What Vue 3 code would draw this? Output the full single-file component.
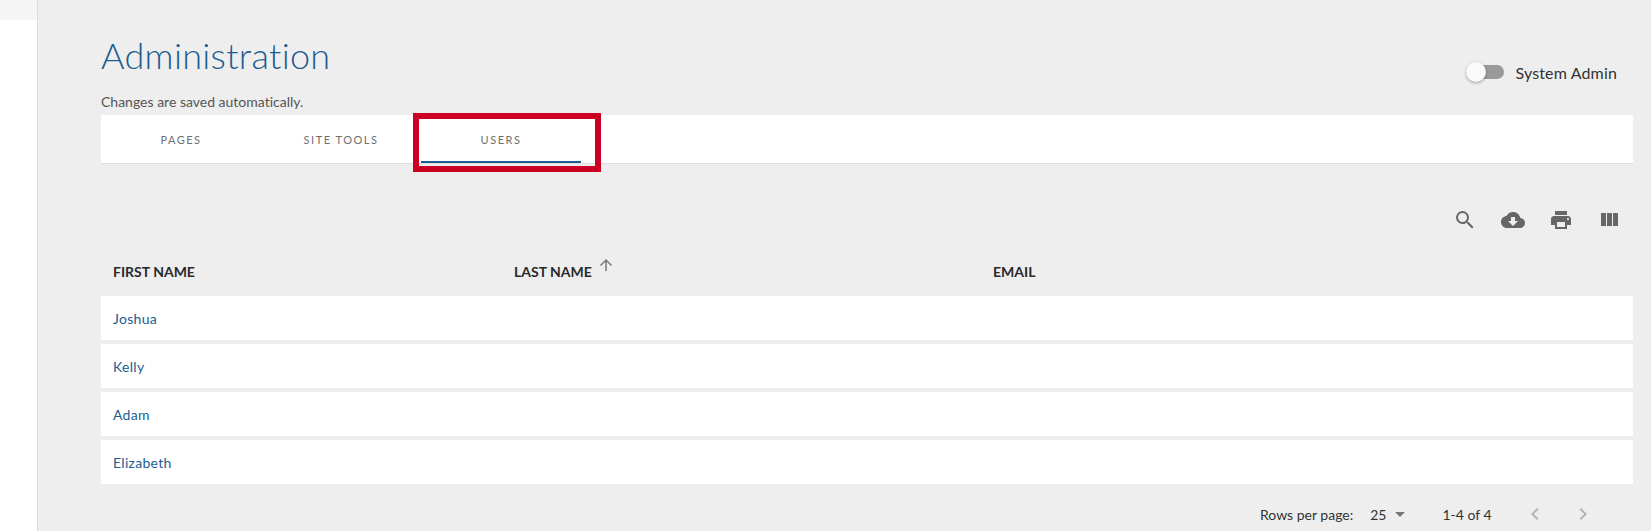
<script setup>
const tabs = [
  { label: 'PAGES', active: false },
  { label: 'SITE TOOLS', active: false },
  { label: 'USERS', active: true }
]
const users = ['Joshua', 'Kelly', 'Adam', 'Elizabeth']
const tools = [
  { name: 'search', d: 'M15.5 14h-.79l-.28-.27A6.471 6.471 0 0 0 16 9.5 6.5 6.5 0 1 0 9.5 16c1.61 0 3.09-.59 4.23-1.57l.27.28v.79l5 4.99L20.49 19l-4.99-5zm-6 0C7.01 14 5 11.99 5 9.5S7.01 5 9.5 5 14 7.01 14 9.5 11.99 14 9.5 14z' },
  { name: 'download', d: 'M19.35 10.04C18.67 6.59 15.64 4 12 4 9.11 4 6.6 5.64 5.35 8.04 2.34 8.36 0 10.91 0 14c0 3.31 2.69 6 6 6h13c2.76 0 5-2.24 5-5 0-2.64-2.05-4.78-4.65-4.96zM17 13l-5 5-5-5h3V9h4v4h3z' },
  { name: 'print', d: 'M19 8H5c-1.66 0-3 1.34-3 3v6h4v4h12v-4h4v-6c0-1.66-1.34-3-3-3zm-3 11H8v-5h8v5zm3-7c-.55 0-1-.45-1-1s.45-1 1-1 1 .45 1 1-.45 1-1 1zm-1-9H6v4h12V3z' },
  { name: 'columns', d: 'M10 18h5V5h-5v13zm-6 0h5V5H4v13zM16 5v13h5V5h-5z' }
]
</script>

<template>
  <div class="page">
    <aside class="sidebar"><div class="sidebar-top"></div></aside>
    <main class="main">
      <header class="head">
        <div>
          <h1 class="title">Administration</h1>
          <p class="note">Changes are saved automatically.</p>
        </div>
        <label class="switch">
          <span class="track"><span class="thumb"></span></span>
          <span class="switch-label">System Admin</span>
        </label>
      </header>

      <nav class="tabs">
        <div v-for="t in tabs" :key="t.label" class="tab" :class="{ active: t.active }">
          {{ t.label }}
          <span v-if="t.active" class="highlight"></span>
        </div>
      </nav>

      <div class="tools">
        <svg v-for="t in tools" :key="t.name" class="tool" viewBox="0 0 24 24"><path :d="t.d" /></svg>
      </div>

      <div class="row header-row">
        <div class="cell">FIRST NAME</div>
        <div class="cell">
          LAST NAME
          <svg class="sort" viewBox="0 0 24 24"><path d="M4 12l1.41 1.41L11 7.83V20h2V7.83l5.58 5.59L20 12l-8-8-8 8z" /></svg>
        </div>
        <div class="cell">EMAIL</div>
      </div>
      <div v-for="u in users" :key="u" class="row body-row">
        <div class="cell">{{ u }}</div>
        <div class="cell"></div>
        <div class="cell"></div>
      </div>

      <footer class="pager">
        <span class="rows-label">Rows per page:</span>
        <span class="rows-value">25</span>
        <svg class="drop" viewBox="0 0 24 24"><path d="M7 10l5 5 5-5z" /></svg>
        <span class="range">1-4 of 4</span>
        <svg class="chev first" viewBox="0 0 24 24"><path d="M15.41 7.41L14 6l-6 6 6 6 1.41-1.41L10.83 12z" /></svg>
        <svg class="chev" viewBox="0 0 24 24"><path d="M10 6L8.59 7.41 13.17 12l-4.58 4.59L10 18l6-6z" /></svg>
      </footer>
    </main>
  </div>
</template>

<style>
html, body { margin: 0; overflow: hidden; }
</style>

<style scoped>
.page {
  display: flex;
  width: 1651px;
  height: 531px;
  overflow: hidden;
  background: #eeeeee;
  font-family: Lato, "Liberation Sans", sans-serif;
  font-variant-ligatures: none;
  color: #333;
}
.sidebar {
  width: 37px;
  flex: none;
  background: #fff;
  border-right: 1px solid #dcdcdc;
}
.sidebar-top { height: 20px; background: #f5f5f5; }
.main {
  flex: 1;
  min-width: 0;
  padding: 0 18px 0 63px;
}
.head {
  display: flex;
  justify-content: space-between;
  height: 115px;
}
.title {
  margin: 0;
  padding-top: 34px;
  font-size: 36px;
  line-height: 43px;
  font-weight: 300;
  letter-spacing: 0.3px;
  color: #1b5c91;
}
.note {
  margin: 16px 0 0;
  font-size: 14px;
  line-height: 17px;
  color: #555;
}
.switch {
  display: flex;
  align-items: center;
  gap: 11px;
  height: 24px;
  margin-top: 60px;
  margin-right: 16px;
}
.track {
  position: relative;
  display: block;
  width: 32px;
  height: 14px;
  border-radius: 7px;
  background: #9a9a9a;
}
.thumb {
  position: absolute;
  left: -6px;
  top: -3px;
  width: 20px;
  height: 20px;
  border-radius: 50%;
  background: #fafafa;
  box-shadow: 0 1px 3px rgba(0, 0, 0, 0.35);
}
.switch-label { font-size: 16px; letter-spacing: 0.15px; color: #333; }
.tabs {
  display: flex;
  height: 48px;
  background: #fff;
  border-bottom: 1px solid #dedede;
}
.tab {
  position: relative;
  width: 160px;
  display: flex;
  align-items: center;
  justify-content: center;
  box-sizing: border-box;
  font-size: 11px;
  letter-spacing: 1.5px;
  color: #6f6f6f;
}
.tab.active { box-shadow: inset 0 -2px 0 #1b5c91; }
.highlight {
  position: absolute;
  left: -8px;
  right: -20px;
  top: -2px;
  bottom: -9px;
  border: 6px solid #cc0022;
}
.tools {
  display: flex;
  justify-content: flex-end;
  gap: 24px;
  height: 24px;
  margin-top: 44px;
  padding-right: 12px;
}
.tool { width: 24px; height: 24px; fill: #666; }
.row {
  display: grid;
  grid-template-columns: 401px 479px 1fr;
  align-items: center;
}
.cell { padding-left: 12px; }
.header-row {
  box-sizing: border-box;
  height: 44px;
  padding-bottom: 4px;
  margin-top: 19px;
  margin-bottom: 1px;
  font-size: 14px;
  font-weight: 700;
  color: #2a2a2a;
}
.header-row .cell { position: relative; }
.sort {
  position: absolute;
  margin-left: 5px;
  top: -7px;
  width: 18px;
  height: 18px;
  fill: #777;
}
.body-row {
  height: 44px;
  margin-bottom: 4px;
  background: #fff;
  font-size: 14px;
  letter-spacing: 0.3px;
  color: #1b5c91;
}
.pager {
  display: flex;
  align-items: center;
  height: 24px;
  margin-top: 18px;
  padding-left: 1159px;
  font-size: 14px;
  color: #333;
}
.rows-value { margin-left: 17px; }
.drop { width: 24px; height: 24px; margin-left: 2px; fill: #777; }
.range { margin-left: 30px; }
.chev { width: 24px; height: 24px; fill: #b4b4b4; margin-left: 24px; }
.chev.first { margin-left: 31px; }
</style>
